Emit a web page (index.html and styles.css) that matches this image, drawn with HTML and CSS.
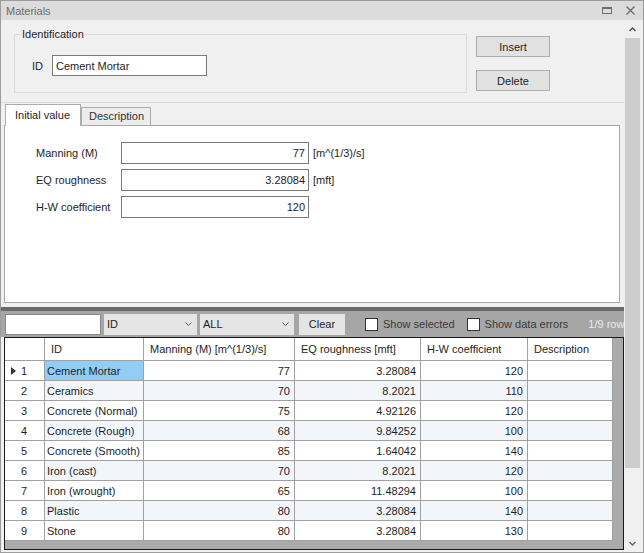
FILE: index.html
```html
<!DOCTYPE html>
<html lang="en">

<head>
  <meta charset="UTF-8" />
  <title>Materials</title>
  <link rel="stylesheet" href="styles.css">
</head>

<body>
  <div class="window">
    <div class="titlebar">
      <span>Materials</span>
      <div class="title-icons">
        <svg width="10" height="8" viewBox="0 0 10 8"><rect x="0.5" y="0.5" width="9" height="6" fill="none" stroke="#6d6d6d"/><rect x="0" y="0" width="10" height="2" fill="#6d6d6d"/></svg>
        <svg width="9" height="9" viewBox="0 0 9 9"><path d="M0.5 0.5 L8.5 8.5 M8.5 0.5 L0.5 8.5" stroke="#6d6d6d" stroke-width="1.4"/></svg>
      </div>
    </div>

    <div class="frame">
      <div class="main">
        <div class="top">
          <fieldset class="ident">
            <legend>Identification</legend>
            <div class="ident-row">
              <label>ID</label>
              <input type="text" class="id-input" value="Cement Mortar" />
            </div>
          </fieldset>
          <div class="actions">
            <button type="button">Insert</button>
            <button type="button">Delete</button>
          </div>
        </div>

        <div class="tabs">
          <div class="tab active">Initial value</div>
          <div class="tab">Description</div>
        </div>
        <div class="tab-panel">
          <div class="field">
            <label>Manning (M)</label>
            <input type="text" value="77" />
            <span class="unit">[m^(1/3)/s]</span>
          </div>
          <div class="field">
            <label>EQ roughness</label>
            <input type="text" value="3.28084" />
            <span class="unit">[mft]</span>
          </div>
          <div class="field">
            <label>H-W coefficient</label>
            <input type="text" value="120" />
          </div>
        </div>

        <div class="splitter"></div>

        <div class="toolbar">
          <input type="text" class="search" />
          <div class="combo">ID<svg width="7" height="4" viewBox="0 0 7 4"><path d="M0.5 0.5 L3.5 3.5 L6.5 0.5" fill="none" stroke="#555"/></svg></div>
          <div class="combo">ALL<svg width="7" height="4" viewBox="0 0 7 4"><path d="M0.5 0.5 L3.5 3.5 L6.5 0.5" fill="none" stroke="#555"/></svg></div>
          <button type="button" class="clear">Clear</button>
          <label class="check"><span class="box"></span>Show selected</label>
          <label class="check"><span class="box"></span>Show data errors</label>
          <span class="count">1/9 rows</span>
        </div>

        <div class="grid">
          <table>
            <thead>
              <tr>
                <th class="rh"></th>
                <th class="c-id">ID</th>
                <th class="c-man">Manning (M) [m^(1/3)/s]</th>
                <th class="c-eq">EQ roughness [mft]</th>
                <th class="c-hw">H-W coefficient</th>
                <th class="c-desc">Description</th>
              </tr>
            </thead>
            <tbody>
              <tr><td class="rh"><span class="cur"></span>1</td><td class="sel">Cement Mortar</td><td class="num">77</td><td class="num">3.28084</td><td class="num">120</td><td></td></tr>
              <tr><td class="rh">2</td><td>Ceramics</td><td class="num">70</td><td class="num">8.2021</td><td class="num">110</td><td></td></tr>
              <tr><td class="rh">3</td><td>Concrete (Normal)</td><td class="num">75</td><td class="num">4.92126</td><td class="num">120</td><td></td></tr>
              <tr><td class="rh">4</td><td>Concrete (Rough)</td><td class="num">68</td><td class="num">9.84252</td><td class="num">100</td><td></td></tr>
              <tr><td class="rh">5</td><td>Concrete (Smooth)</td><td class="num">85</td><td class="num">1.64042</td><td class="num">140</td><td></td></tr>
              <tr><td class="rh">6</td><td>Iron (cast)</td><td class="num">70</td><td class="num">8.2021</td><td class="num">120</td><td></td></tr>
              <tr><td class="rh">7</td><td>Iron (wrought)</td><td class="num">65</td><td class="num">11.48294</td><td class="num">100</td><td></td></tr>
              <tr><td class="rh">8</td><td>Plastic</td><td class="num">80</td><td class="num">3.28084</td><td class="num">140</td><td></td></tr>
              <tr><td class="rh">9</td><td>Stone</td><td class="num">80</td><td class="num">3.28084</td><td class="num">130</td><td></td></tr>
            </tbody>
          </table>
        </div>
      </div>

      <div class="vscroll">
        <div class="arrow"><svg width="7" height="5" viewBox="0 0 7 5"><path d="M0.5 4 L3.5 1 L6.5 4" fill="none" stroke="#555" stroke-width="1.5"/></svg></div>
        <div class="thumb"></div>
        <div class="track"></div>
        <div class="arrow"><svg width="7" height="5" viewBox="0 0 7 5"><path d="M0.5 1 L3.5 4 L6.5 1" fill="none" stroke="#666" stroke-width="1.5"/></svg></div>
      </div>
    </div>
  </div>
</body>

</html>
```

FILE: styles.css
```css
* {
  box-sizing: border-box;
}

body {
  margin: 0;
  font-family: "Liberation Sans", Arial, sans-serif;
  font-size: 11px;
  color: #1e1e1e;
  background: #f0f0f0;
}

.window {
  width: 644px;
  height: 553px;
  border: 1px solid #9c9c9c;
  display: flex;
  flex-direction: column;
  background: #f0f0f0;
}

.titlebar {
  height: 19px;
  flex: none;
  background: #dcdcdc;
  color: #6d6d6d;
  display: flex;
  align-items: center;
  justify-content: space-between;
  padding: 0 8px 0 5px;
}

.title-icons {
  display: flex;
  align-items: center;
  gap: 14px;
}

.frame {
  flex: 1;
  display: flex;
  min-height: 0;
}

.main {
  width: 623px;
  display: flex;
  flex-direction: column;
}

/* identification block */
.top {
  height: 83px;
  flex: none;
  display: flex;
  align-items: flex-start;
  padding-left: 13px;
  border-bottom: 1px solid #dadada;
}

.ident {
  margin: 8px 0 0;
  padding: 0;
  width: 453px;
  height: 65px;
  border: 1px solid #dcdcdc;
}

.ident legend {
  margin-left: 6px;
  padding: 0 1px;
  line-height: 13px;
}

.ident-row {
  display: flex;
  align-items: center;
  padding-left: 17px;
  margin-top: 14px;
}

.ident-row label {
  width: 20px;
}

input {
  font-family: inherit;
  font-size: 11px;
  color: #1e1e1e;
  border: 1px solid #7a7a7a;
  background: #fff;
  margin: 0;
  outline: none;
}

.id-input {
  width: 155px;
  height: 21px;
  padding: 0 3px;
}

.actions {
  display: flex;
  flex-direction: column;
  gap: 13px;
  margin: 16px 0 0 9px;
}

button {
  font-family: inherit;
  font-size: 11px;
  color: #1e1e1e;
  background: #e1e1e1;
  border: 1px solid #adadad;
  padding: 0;
  margin: 0;
}

.actions button {
  width: 74px;
  height: 21px;
}

/* tabs */
.tabs {
  height: 22px;
  flex: none;
  display: flex;
  align-items: flex-end;
  padding-left: 4px;
}

.tab {
  height: 18px;
  width: 70px;
  border: 1px solid #acacac;
  border-bottom: none;
  background: #ececec;
  padding-left: 7px;
  line-height: 17px;
  color: #333;
}

.tab.active {
  position: relative;
  height: 22px;
  width: 76px;
  margin-bottom: -1px;
  background: #fff;
  padding-left: 9px;
  line-height: 20px;
  color: #1e1e1e;
}

.tab-panel {
  height: 178px;
  flex: none;
  margin: 0 4px 0 3px;
  background: #fff;
  border: 1px solid #a8a8a8;
  padding: 16px 0 0 31px;
  display: flex;
  flex-direction: column;
  gap: 5px;
}

.field {
  display: flex;
  align-items: center;
}

.field label {
  width: 85px;
}

.field input {
  width: 188px;
  height: 22px;
  text-align: right;
  padding: 0 3px;
}

.unit {
  margin-left: 4px;
}

.splitter {
  height: 4px;
  flex: none;
  margin-top: 4px;
  background: #6b6b6b;
}

/* filter toolbar */
.toolbar {
  height: 26px;
  flex: none;
  background: #a6a6a6;
  display: flex;
  align-items: center;
  padding-left: 4px;
  white-space: nowrap;
  overflow: hidden;
  color: #3a3a3a;
}

.toolbar > * {
  flex: none;
}

.search {
  width: 96px;
  height: 21px;
  border-color: #8a8a8a;
}

.combo {
  width: 93px;
  height: 21px;
  margin-left: 3px;
  background: #e5e5e5;
  color: #1e1e1e;
  display: flex;
  align-items: center;
  justify-content: space-between;
  padding: 0 5px 0 3px;
}

.combo + .combo {
  width: 94px;
}

.clear {
  width: 46px;
  height: 21px;
  margin-left: 5px;
  background: #e5e5e5;
  border-color: #e5e5e5;
}

.check {
  display: flex;
  align-items: center;
  margin-left: 20px;
}

.check + .check {
  margin-left: 12px;
}

.box {
  width: 13px;
  height: 13px;
  background: #fff;
  border: 1px solid #333;
  margin-right: 5px;
}

.count {
  margin-left: 20px;
  color: #ececec;
}

/* data grid */
.grid {
  height: 213px;
  flex: none;
  margin-left: 3px;
  border: 1px solid #1a1a1a;
  background: #ababab;
  overflow: hidden;
}

table {
  border-collapse: separate;
  border-spacing: 0;
  table-layout: fixed;
  width: 608px;
}

th,
td {
  border-right: 1px solid #a0a0a0;
  border-bottom: 1px solid #a0a0a0;
  height: 20px;
  padding: 0 2px;
  font-weight: normal;
  text-align: left;
  white-space: nowrap;
  overflow: hidden;
  background: #fff;
}

th {
  height: 23px;
  padding: 0 6px;
}

tbody tr:nth-child(even) td {
  background: #f2f5fa;
}

tbody tr td.rh {
  background: #fff;
  padding-left: 16px;
  position: relative;
}

.rh { width: 40px; }
.c-id { width: 99px; }
.c-man { width: 151px; }
.c-eq { width: 126px; }
.c-hw { width: 107px; }
.c-desc { width: 85px; }

td.num {
  text-align: right;
  padding-right: 4px;
}

td.sel {
  background: #91cdf6;
}

.cur {
  position: absolute;
  left: 6px;
  top: 6px;
  border-left: 5px solid #333;
  border-top: 4px solid transparent;
  border-bottom: 4px solid transparent;
}

/* window scrollbar */
.vscroll {
  flex: 1;
  display: flex;
  flex-direction: column;
  padding: 0 3px 0 1px;
}

.arrow {
  height: 18px;
  flex: none;
  display: flex;
  align-items: center;
  justify-content: center;
}

.thumb {
  height: 430px;
  flex: none;
  background: #cdcdcd;
}

.track {
  flex: 1;
}
```
